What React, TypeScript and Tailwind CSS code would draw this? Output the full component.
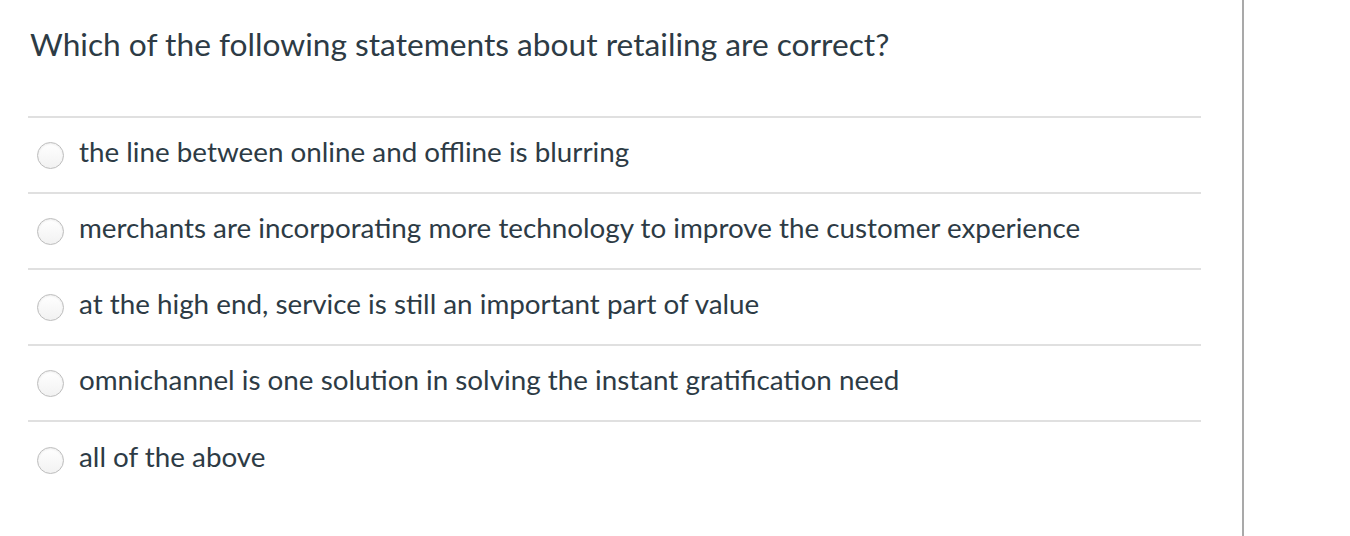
const options = [
  "the line between online and offline is blurring",
  "merchants are incorporating more technology to improve the customer experience",
  "at the high end, service is still an important part of value",
  "omnichannel is one solution in solving the instant gratification need",
  "all of the above",
];

function Radio() {
  return (
    <span className="block h-[27px] w-[27px] flex-shrink-0 rounded-full border border-[#bdbdbd] bg-gradient-to-b from-white to-[#f2f2f2] shadow-[inset_0_1px_2px_rgba(0,0,0,0.08)]" />
  );
}

export default function App() {
  return (
    <div className="flex h-[536px] w-[1350px] overflow-hidden bg-white font-['Lato',sans-serif] text-[#2d3b45]">
      <div className="w-[1242px] flex-shrink-0 pl-[28px] pr-[41px]">
        <h1 className="pt-[23px] pb-[51px] pl-[2px] text-[31.7px] leading-[42px]">
          Which of the following statements about retailing are correct?
        </h1>
        <div className="border-t-2 border-[#e0e0e0]">
          {options.map((o, i) => (
            <div
              key={i}
              className={
                "flex h-[76px] items-center gap-[15px] pl-[9px] " +
                (i < options.length - 1 ? "border-b-2 border-[#e0e0e0]" : "")
              }
            >
              <Radio />
              <span className="pb-[6px] text-[27.8px] leading-[36px]">{o}</span>
            </div>
          ))}
        </div>
      </div>
      <div className="h-full w-[2px] bg-[#a9a9a9]" />
    </div>
  );
}
